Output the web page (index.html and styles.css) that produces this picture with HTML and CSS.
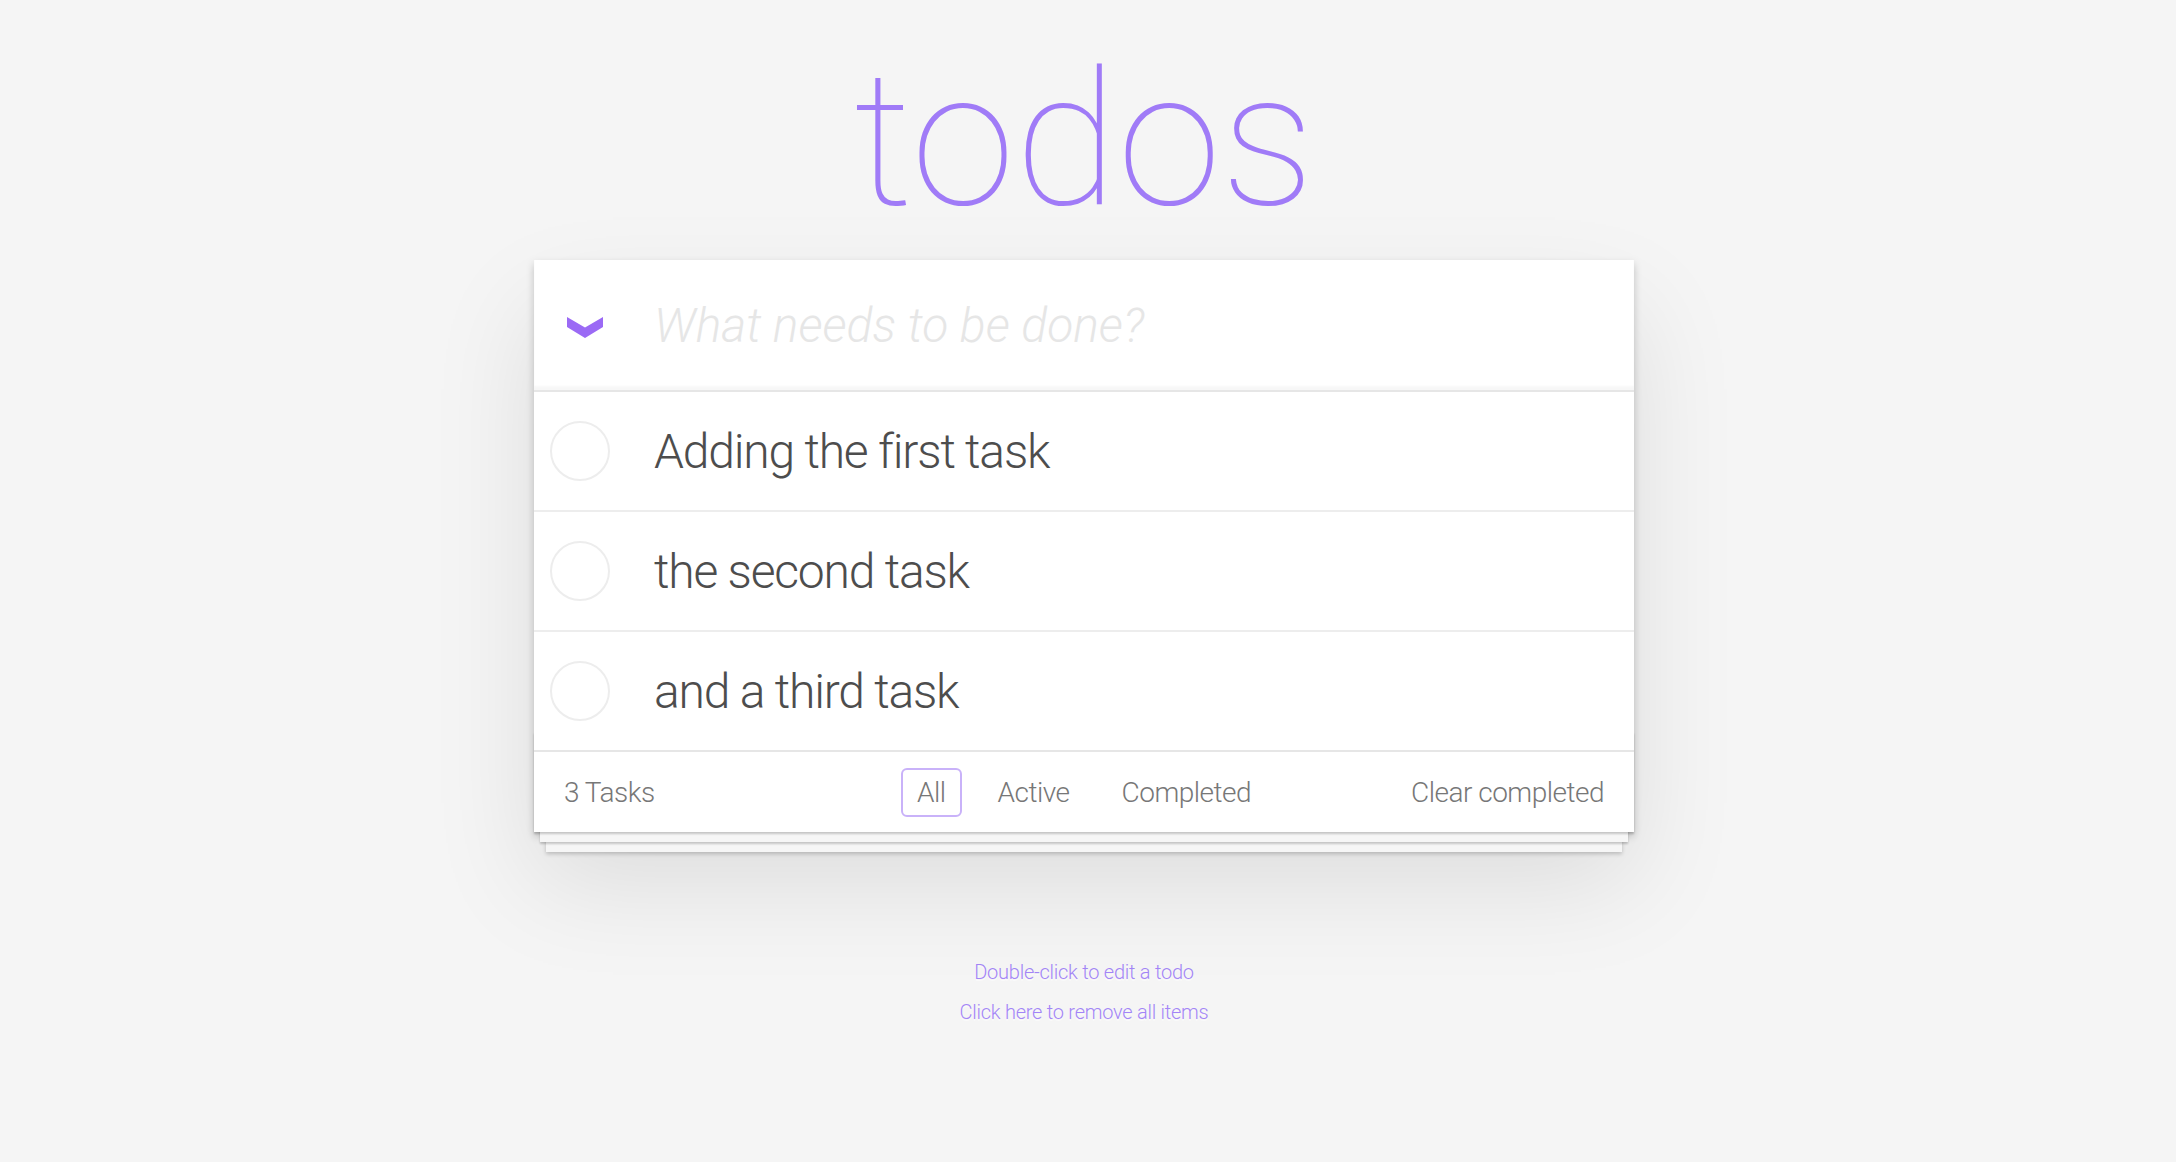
FILE: index.html
```html
<!DOCTYPE html>
<html lang="en">
<head>
<meta charset="utf-8">
<title>todos</title>
<link rel="stylesheet" href="styles.css">
</head>
<body>
<div class="page">
  <h1 class="title">todos</h1>
  <section class="todoapp">
    <header class="header">
      <span class="toggle-all">
        <svg width="36" height="21" viewBox="0 0 36 21"><polygon points="0,0 18,10.5 36,0 36,10 18,21 0,10" fill="#9b6af5"/></svg>
      </span>
      <input class="new-todo" type="text" placeholder="What needs to be done?">
    </header>
    <ul class="todo-list">
      <li class="todo"><span class="check"></span><span class="label">Adding the first task</span></li>
      <li class="todo"><span class="check"></span><span class="label">the second task</span></li>
      <li class="todo"><span class="check"></span><span class="label">and a third task</span></li>
    </ul>
    <footer class="footer">
      <span class="count">3 Tasks</span>
      <ul class="filters">
        <li><a class="filter selected">All</a></li>
        <li><a class="filter">Active</a></li>
        <li><a class="filter">Completed</a></li>
      </ul>
      <span class="clear">Clear completed</span>
    </footer>
  </section>
  <div class="info">
    <p>Double-click to edit a todo</p>
    <p>Click here to remove all items</p>
  </div>
</div>
</body>
</html>
```
FILE: styles.css
```css
html, body {
  margin: 0;
  padding: 0;
}
body {
  background: #f5f5f5;
  font-family: Roboto, "Helvetica Neue", "Liberation Sans", sans-serif;
  font-weight: 300;
  color: #4d4d4d;
  padding-right: 8px;
}
.page {
  width: 1100px;
  margin: 0 auto;
}
.title {
  margin: 46px 0 26px;
  font-size: 188px;
  line-height: 188px;
  font-weight: 100;
  text-align: center;
  color: #a07bf7;
}
.todoapp {
  position: relative;
  background: #fff;
  box-shadow: 0 4px 8px 0 rgba(0,0,0,0.2), 0 50px 100px 0 rgba(0,0,0,0.1);
}
.header {
  display: flex;
  align-items: center;
  height: 130px;
  box-shadow: inset 0 -4px 2px rgba(0,0,0,0.03);
  border-bottom: 2px solid #e6e6e6;
}
.toggle-all {
  width: 120px;
  display: flex;
  justify-content: center;
  padding-right: 18px;
  padding-top: 4px;
  box-sizing: border-box;
}
.toggle-all svg { display: block; }
.new-todo {
  flex: 1;
  border: none;
  outline: none;
  background: transparent;
  font-family: inherit;
  font-size: 48px;
  font-weight: 300;
  color: #4d4d4d;
  padding: 0;
  margin: 0;
  height: 67px;
}
.new-todo::placeholder {
  color: #e6e6e6;
  font-style: italic;
  font-weight: 300;
}
.todo-list {
  list-style: none;
  margin: 0;
  padding: 0;
}
.todo {
  display: flex;
  align-items: center;
  height: 118px;
  border-bottom: 2px solid #ededed;
}
.todo:last-child {
  border-bottom: 2px solid #e6e6e6;
}
.check {
  width: 60px;
  height: 60px;
  box-sizing: border-box;
  border: 2px solid #ededed;
  border-radius: 50%;
  margin-left: 16px;
  margin-right: 44px;
  flex: none;
}
.label {
  font-size: 48px;
  line-height: 58px;
  color: #4d4d4d;
  font-weight: 300;
  letter-spacing: -1.2px;
  padding-top: 2px;
}
.footer {
  position: relative;
  display: grid;
  grid-template-columns: 1fr auto 1fr;
  align-items: center;
  height: 80px;
  padding: 0 30px;
  font-size: 28px;
  letter-spacing: -0.5px;
  color: #777;
}
.footer::before {
  content: "";
  position: absolute;
  left: 0;
  right: 0;
  bottom: 0;
  height: 100px;
  box-shadow: 0 2px 2px rgba(0,0,0,0.2),
              0 16px 0 -6px #f6f6f6,
              0 18px 2px -6px rgba(0,0,0,0.2),
              0 32px 0 -12px #f6f6f6,
              0 34px 4px -12px rgba(0,0,0,0.2);
  pointer-events: none;
}
.count {
  justify-self: start;
}
.filters {
  display: flex;
  gap: 20px;
  list-style: none;
  margin: 0;
  padding: 0;
}
.filter {
  display: block;
  padding: 6px 14px;
  line-height: 33px;
  border: 2px solid transparent;
  border-radius: 6px;
  color: inherit;
}
.filter.selected {
  border-color: #c9b2f9;
}
.clear {
  justify-self: end;
}
.info {
  margin-top: 130px;
  text-align: center;
  font-size: 20px;
  letter-spacing: -0.25px;
  color: #a385f7;
  text-shadow: 0 2px 0 rgba(255,255,255,0.5);
}
.info p {
  margin: 0 0 20px;
  line-height: 20px;
}
```
